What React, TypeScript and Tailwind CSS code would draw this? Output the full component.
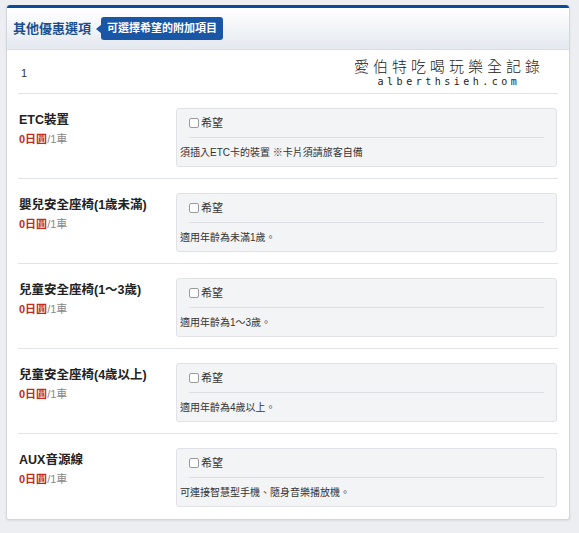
import React from 'react';

interface OptionItem {
  id: string;
  name: string;
  price: string;
  unit: string;
  note: string;
}

const options: OptionItem[] = [
  { id: 'etc', name: 'ETC裝置', price: '0日圓', unit: '/1車', note: '須插入ETC卡的裝置 ※卡片須請旅客自備' },
  { id: 'baby', name: '嬰兒安全座椅(1歲未滿)', price: '0日圓', unit: '/1車', note: '適用年齡為未滿1歲。' },
  { id: 'child', name: '兒童安全座椅(1〜3歲)', price: '0日圓', unit: '/1車', note: '適用年齡為1〜3歲。' },
  { id: 'junior', name: '兒童安全座椅(4歲以上)', price: '0日圓', unit: '/1車', note: '適用年齡為4歲以上。' },
  { id: 'aux', name: 'AUX音源線', price: '0日圓', unit: '/1車', note: '可連接智慧型手機、隨身音樂播放機。' },
];

const font = { fontFamily: '"Liberation Sans", "Noto Sans CJK TC", sans-serif' };

const OptionRow: React.FC<{ item: OptionItem; last: boolean }> = ({ item, last }) => (
  <div className={`flex h-[85px] pt-[14px] ${last ? '' : 'border-b border-[#e1e3e6]'}`}>
    {/* left: name + price */}
    <div className="w-[158px] shrink-0 pl-[1px] pt-[3px]">
      <div className="text-[12.5px] leading-[18px] font-bold text-[#222]">{item.name}</div>
      <div className="mt-[3px] text-[11px] leading-[14px]">
        <span className="font-bold text-[#c42b1c]">{item.price}</span>
        <span className="text-[#888]">{item.unit}</span>
      </div>
    </div>

    {/* right: checkbox box */}
    <div className="w-[381px] h-[59px] rounded-[3px] border border-[#e0e2e6] bg-[#f3f4f6]">
      <div className="mx-[12px] h-[29px] flex items-center border-b border-[#dcdee2]">
        <label className="flex items-center gap-[2px] text-[11px] text-[#333]">
          <span className="w-[10px] h-[10px] border border-[#9a9a9a] rounded-[2px] bg-white" />
          希望
        </label>
      </div>
      <div className="px-[3px] h-[28px] flex items-center text-[10px] text-[#333]">{item.note}</div>
    </div>
  </div>
);

export default function App() {
  return (
    <div className="w-[579px] h-[533px] bg-[#eceef1] pt-[5px] pl-[6px]" style={font}>
      <div className="w-[564px] rounded-[3px] border-x border-b border-[#d3d7dc] bg-white shadow-[0_1px_2px_rgba(0,0,0,0.08)]">
        {/* header */}
        <div className="h-[45px] border-t-[3px] border-[#0c4a9b] rounded-t-[3px] bg-gradient-to-b from-white to-[#e4e9f0] border-b border-b-[#d9dee5] flex items-center pl-[6px]">
          <h2 className="text-[13px] font-bold text-[#1b4e8f]">其他優惠選項</h2>
          <div className="ml-[10px] relative flex items-center">
            <span className="absolute -left-[5px] w-0 h-0 border-y-[5px] border-y-transparent border-r-[6px] border-r-[#1a56a6]" />
            <span className="h-[23px] px-[6px] flex items-center rounded-[3px] bg-[#1a56a6] text-white text-[11px] font-bold">
              可選擇希望的附加項目
            </span>
          </div>
        </div>

        {/* body */}
        <div className="px-[11px]">
          <div className="h-[44px] border-b border-[#e1e3e6] flex justify-between">
            <div className="pl-[3px] pt-[15px] text-[11px] text-[#333]">1</div>
            <div className="pt-[6px] pr-[14px] text-[#222] flex flex-col items-center">
              <div className="text-[15px] leading-[19px] tracking-[4px] font-light" style={{ fontFamily: '"Noto Sans CJK TC", sans-serif' }}>
                愛伯特吃喝玩樂全記錄
              </div>
              <div className="text-[10px] leading-[14px] tracking-[3.5px]" style={{ fontFamily: '"DejaVu Sans Mono", monospace' }}>
                alberthsieh.com
              </div>
            </div>
          </div>
          {options.map((item, i) => (
            <OptionRow key={item.id} item={item} last={i === options.length - 1} />
          ))}
        </div>
      </div>
    </div>
  );
}
